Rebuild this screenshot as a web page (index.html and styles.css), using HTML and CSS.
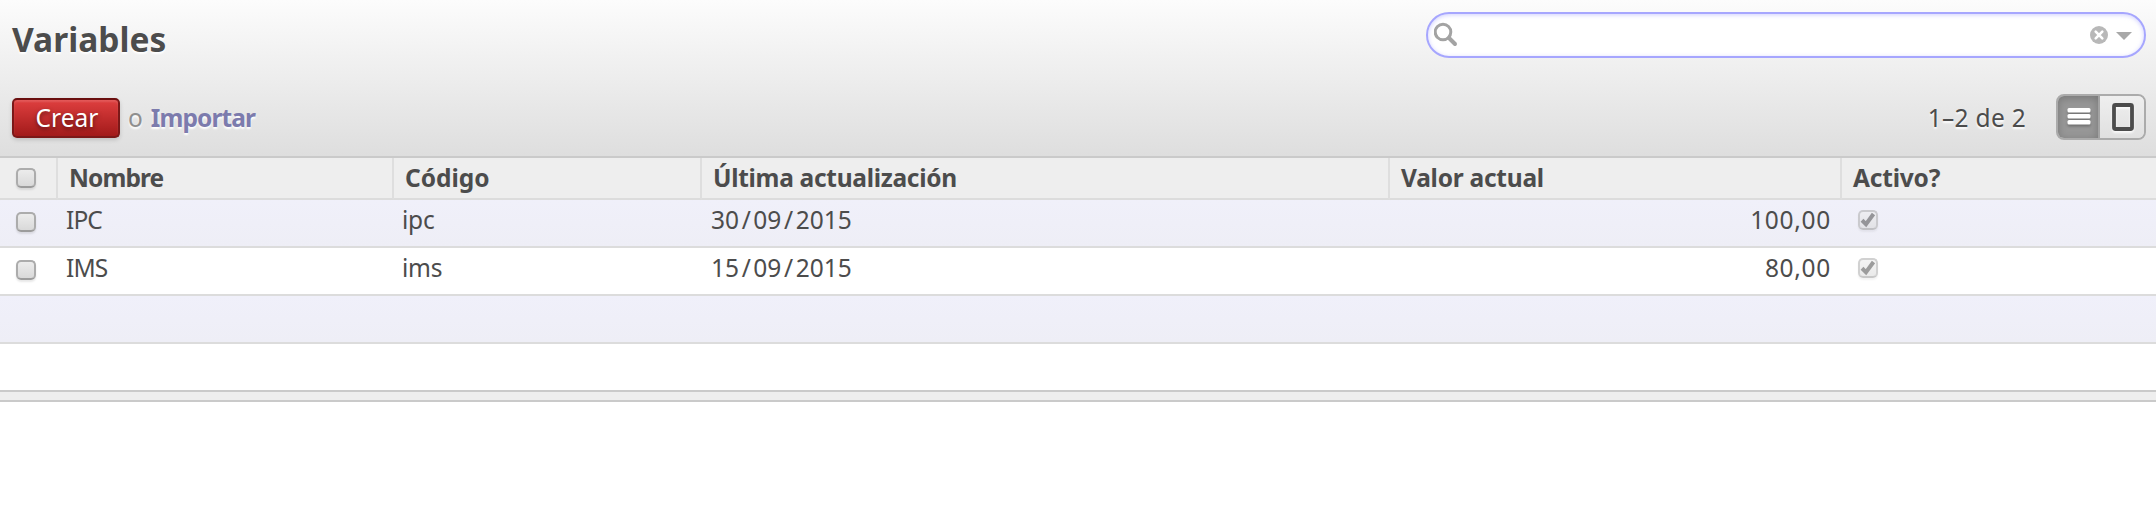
FILE: index.html
```html
<!DOCTYPE html>
<html lang="es">
<head>
<meta charset="utf-8">
<title>Variables</title>
<link rel="stylesheet" href="styles.css">
</head>
<body>
<header class="header">
  <div class="bar bar-top">
    <h1 class="title">Variables</h1>
    <div class="search">
      <svg class="search-icon" width="26" height="26" viewBox="0 0 26 26"><circle cx="9" cy="10" r="7.8" fill="none" stroke="#a3a3a3" stroke-width="3"/><path d="M15 16l6 6" stroke="#a3a3a3" stroke-width="4" stroke-linecap="round"/></svg>
      <input class="search-input" type="text" aria-label="Buscar">
      <svg class="clear-icon" width="18" height="18" viewBox="0 0 18 18"><circle cx="9" cy="9" r="9" fill="#b8b8b8"/><path d="M5.7 5.7l6.6 6.6M12.3 5.7l-6.6 6.6" stroke="#fff" stroke-width="2.6" stroke-linecap="round"/></svg>
      <svg class="caret-icon" width="16" height="8" viewBox="0 0 16 8"><path d="M0 0h16L8 8z" fill="#a8a8a8"/></svg>
    </div>
  </div>
  <div class="bar bar-bottom">
    <div class="actions">
      <button class="create">Crear</button>
      <span class="or">o</span>
      <a class="import">Importar</a>
    </div>
    <div class="pager">
      <span class="range">1–2 de 2</span>
      <div class="switch">
        <span class="view view-active"><svg width="24" height="20" viewBox="0 0 24 20"><g fill="#fff"><rect x=".5" y="1" width="23" height="4.4" rx="1.5"/><rect x=".5" y="7" width="23" height="4.4" rx="1.5"/><rect x=".5" y="13" width="23" height="4.4" rx="1.5"/></g></svg></span>
        <span class="view view-form"><svg width="22" height="28" viewBox="0 0 22 28"><rect x="2" y="2" width="18" height="24" rx="1.5" fill="none" stroke="#4c4c4c" stroke-width="3.8"/></svg></span>
      </div>
    </div>
  </div>
</header>
<table class="list">
  <colgroup><col class="c-check"><col class="c-name"><col class="c-code"><col class="c-date"><col class="c-value"><col></colgroup>
  <thead>
    <tr><th class="check-cell"><span class="box"></span></th><th class="h-name">Nombre</th><th class="h-code">Código</th><th class="h-date">Última actualización</th><th class="h-value">Valor actual</th><th class="h-active">Activo?</th></tr>
  </thead>
  <tbody>
    <tr><td class="check-cell"><span class="box"></span></td><td class="name">IPC</td><td class="code">ipc</td><td>30<i class="sep">/</i>09<i class="sep">/</i>2015</td><td class="number">100,00</td><td class="active-cell"><span class="box box-off"><svg width="16" height="16" viewBox="0 0 16 16"><path d="M2 8.3L6 12.2L13.5 2" fill="none" stroke="#4c4c4c" stroke-width="4"/></svg></span></td></tr>
    <tr><td class="check-cell"><span class="box"></span></td><td class="name">IMS</td><td class="code">ims</td><td>15<i class="sep">/</i>09<i class="sep">/</i>2015</td><td class="number">80,00</td><td class="active-cell"><span class="box box-off"><svg width="16" height="16" viewBox="0 0 16 16"><path d="M2 8.3L6 12.2L13.5 2" fill="none" stroke="#4c4c4c" stroke-width="4"/></svg></span></td></tr>
    <tr><td colspan="6"></td></tr>
    <tr><td colspan="6"></td></tr>
  </tbody>
  <tfoot><tr><td colspan="6"></td></tr></tfoot>
</table>
</body>
</html>
```
FILE: styles.css
```css
* { box-sizing: border-box; }
body {
  margin: 0;
  background: #fff;
  color: #4c4c4c;
  font: 24.5px/37px "Noto Sans", sans-serif;
}
.header {
  height: 158px;
  padding: 12px 10px 0 12px;
  border-bottom: 2px solid #cacaca;
  background: linear-gradient(#fcfcfc, #dedede);
  text-shadow: 0 2px 2px #fff;
}
.bar { display: flex; justify-content: space-between; }
.bar-top { height: 82px; align-items: flex-start; }
.bar-bottom { height: 46px; align-items: center; }
.title { margin: 0; font-size: 33.5px; line-height: 55px; font-weight: 700; }
.search {
  width: 720px;
  height: 46px;
  display: flex;
  align-items: center;
  padding: 0 12px 0 6px;
  border: 2px solid #a6a6fe;
  border-radius: 23px;
  background: #fff;
  box-shadow: inset 0 1px 4px #a6a6fe88;
}
.search-icon { margin-top: -1px; }
.search-input { flex: 1; min-width: 0; border: 0; outline: 0; background: transparent; font: inherit; }
.caret-icon { margin: 2px 0 0 8px; }
.actions { display: flex; align-items: center; }
.create {
  width: 108px;
  height: 40px;
  margin-top: 2px;
  padding: 0 0 1px 2px;
  border: 2px solid #7c1818;
  border-top-color: #6a0f0f;
  border-radius: 5px;
  background: linear-gradient(#df3f3f, #a21a1a);
  box-shadow: 0 2px 4px #00000026, inset 0 2px 2px #ffffff22;
  color: #fff;
  font: inherit;
  line-height: 35px;
  text-shadow: 0 2px 4px #00000080;
}
.or { margin-left: 8px; color: #8f8f8f; }
.import { margin-left: 8px; color: #7c7bad; font-weight: 700; letter-spacing: -0.9px; }
.pager { display: flex; align-items: center; }
.range { margin-right: 30px; letter-spacing: 0.3px; }
.switch {
  width: 90px;
  height: 46px;
  display: flex;
  border: 2px solid #ababab;
  border-radius: 8px;
  overflow: hidden;
}
.view { flex: 1; display: flex; align-items: center; justify-content: center; background: linear-gradient(#efefef, #e0e0e0); }
.view svg { filter: drop-shadow(0 2px 1px #ffffffcc); }
.view-form { padding-left: 2px; }
.view-active { flex: 0 0 42px; padding-left: 1px; border-right: 2px solid #a3a3a3; background: #979797; box-shadow: inset 0 2px 8px #00000038; }
.view-active svg { filter: drop-shadow(0 2px 1px #00000040); }
.list { width: 100%; table-layout: fixed; border-collapse: separate; border-spacing: 0; }
.c-check { width: 58px; }
.c-name { width: 336px; }
.c-code { width: 308px; }
.c-date { width: 688px; }
.c-value { width: 452px; }
.list th {
  height: 42px;
  padding: 0 0 0 11px;
  border-right: 2px solid #dedede;
  border-bottom: 2px solid #dcdcdc;
  background: #eee;
  text-align: left;
  vertical-align: top;
  font-weight: 700;
  line-height: 39px;
}
.list th:last-child { border-right: 0; }
.list th.h-name { letter-spacing: -0.9px; }
.list th.h-date { letter-spacing: -0.3px; }
.list th.h-value { letter-spacing: -0.25px; }
.list th.h-active { letter-spacing: -0.2px; }
.list td { height: 48px; padding: 0 0 0 9px; border-bottom: 2px solid #dcdcdc; vertical-align: top; line-height: 39px; }
.list tbody tr:nth-child(odd) td { background: linear-gradient(#f0f0fa, #eeeef6); }
.list tbody tr:last-child td { border-bottom-color: #cacaca; }
.list tfoot td { height: 10px; background: #eee; border-bottom-color: #cacaca; }
.list td.name { padding-left: 8px; letter-spacing: -0.9px; }
.list td.code { padding-left: 8px; letter-spacing: -0.2px; }
.list td.number { padding-right: 11px; text-align: right; letter-spacing: 0.7px; }
.list .check-cell { padding: 10px 0 0 16px; }
.list td.check-cell { padding-top: 12px; }
.list td.active-cell { padding: 10px 0 0 16px; }
.sep { font-style: normal; padding: 0 2.6px; }
.box {
  display: block;
  width: 20px;
  height: 20px;
  border: 2px solid #acacac;
  border-bottom-color: #9c9c9c;
  border-radius: 5px;
  background: linear-gradient(#ececec, #d9d9d9);
  box-shadow: 0 2px 2px #00000018;
}
.box svg { display: block; }
.box-off { opacity: .55; }
```
